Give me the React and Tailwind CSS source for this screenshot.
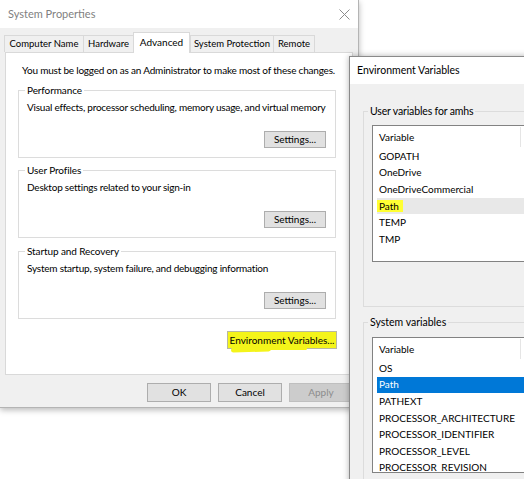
import React from "react";

const Btn = ({ children, className = "" }) => (
  <div
    className={
      "flex items-center justify-center whitespace-nowrap border border-[#adadad] bg-[#e1e1e1] text-black " +
      className
    }
  >
    {children}
  </div>
);

const Group = ({ label, text }) => (
  <div className="relative ml-[12px] w-[318px] h-[68px] border border-[#dcdcdc] pl-[8px] pr-[9px] pt-[9px] flex flex-col">
    <span className="absolute -top-[8px] left-[6px] bg-white px-[2px] leading-[14px] whitespace-nowrap tracking-[-0.1px]">{label}</span>
    <div className="leading-[14px] h-[14px] whitespace-nowrap tracking-[-0.22px]">{text}</div>
    <div className="flex justify-end mt-[17px]">
      <Btn className="w-[62px] h-[17px]">Settings...</Btn>
    </div>
  </div>
);

const Tab = ({ w, children, active }) =>
  active ? (
    <div
      className={`relative z-10 -mb-px h-[21px] shrink-0 bg-white border border-b-0 border-[#d9d9d9] flex items-start justify-center pt-[2px] leading-[14px] whitespace-nowrap ${w}`}
    >
      {children}
    </div>
  ) : (
    <div
      className={`h-[17px] shrink-0 bg-[#f0f0f0] border border-b-0 border-[#d9d9d9] -mr-px flex items-center justify-center leading-[14px] whitespace-nowrap text-[9.5px] ${w}`}
    >
      {children}
    </div>
  );

const ListBox = ({ rows, heightClass }) => (
  <div className={`ml-[8px] border border-[#828282] bg-white text-[10px] ${heightClass}`}>
    <div className="relative h-[22px] flex items-center pl-[6px]">
      Variable
      <span className="absolute left-[147px] top-[1px] h-[20px] w-px bg-[#e5e5e5]" />
    </div>
    {rows.map((r) => (
      <div
        key={r.name}
        className={
          "ml-[4px] h-[16.6px] flex items-center pl-[2px] whitespace-nowrap " +
          (r.sel ? "bg-[#0078d7] text-white" : r.hover ? "bg-[#e8e8e8]" : "")
        }
      >
        {r.mark ? (
          <span className="bg-[#ffff33] -ml-[2px] pl-[2px] pr-[4px] leading-[12px]">{r.name}</span>
        ) : (
          r.name
        )}
      </div>
    ))}
  </div>
);

export default function App() {
  return (
    <div className="relative w-[524px] h-[479px] bg-white overflow-hidden font-['Lato',sans-serif] text-[10px] text-black">
      {/* System Properties window */}
      <div className="absolute left-0 top-0 w-[359px] h-[408px] bg-[#f0f0f0] border-r border-b border-[#b4b4b4] shadow-[0_2px_6px_rgba(0,0,0,0.28)] flex flex-col">
        <div className="h-[28px] shrink-0 bg-white flex items-center justify-between pl-[8px] pr-[8px]">
          <span className="text-[11px] text-[#7f7f7f]">System Properties</span>
          <svg width="11" height="11" viewBox="0 0 11 11">
            <path d="M0.5 0.5 L10.5 10.5 M10.5 0.5 L0.5 10.5" stroke="#8c8c8c" strokeWidth="1" fill="none" />
          </svg>
        </div>
        <div className="h-[24px] shrink-0 flex items-end pl-[4px]">
          <Tab w="w-[80px]">Computer Name</Tab>
          <Tab w="w-[51px]">Hardware</Tab>
          <Tab w="w-[57px]" active>
            Advanced
          </Tab>
          <Tab w="w-[84px]">System Protection</Tab>
          <Tab w="w-[42px]">Remote</Tab>
        </div>
        <div className="mx-[5px] h-[323px] shrink-0 bg-white border border-[#d9d9d9] flex flex-col pt-[10px]">
          <div className="pl-[16px] leading-[14px] h-[14px] whitespace-nowrap tracking-[-0.2px]">
            You must be logged on as an Administrator to make most of these changes.
          </div>
          <div className="mt-[13px]">
            <Group label="Performance" text="Visual effects, processor scheduling, memory usage, and virtual memory" />
          </div>
          <div className="mt-[12px]">
            <Group label="User Profiles" text="Desktop settings related to your sign-in" />
          </div>
          <div className="mt-[13px]">
            <Group label="Startup and Recovery" text="System startup, system failure, and debugging information" />
          </div>
          <div className="mt-[12px] flex justify-end pr-[15px]">
            <div className="relative">
              <Btn className="w-[110px] h-[18px] !bg-[#f4f41a] !border-[#b8b8a0]">Environment Variables...</Btn>
              <span className="absolute left-[4px] top-[16px] w-[40px] h-[5px] rounded-full bg-[#f4f41a] -rotate-2" />
              <span className="absolute left-[30px] top-[16px] w-[50px] h-[3px] rounded-full bg-[#f4f41a]" />
            </div>
          </div>
        </div>
        <div className="mt-[8px] flex pl-[147px] gap-[7px]">
          <Btn className="w-[64px] h-[19px]">OK</Btn>
          <Btn className="w-[64px] h-[19px]">Cancel</Btn>
          <Btn className="w-[64px] h-[19px] !bg-[#cccccc] !border-[#bfbfbf] !text-[#8d8d8d]">Apply</Btn>
        </div>
      </div>

      {/* Environment Variables window */}
      <div className="absolute left-[349px] top-[56px] w-[200px] h-[500px] bg-[#f0f0f0] border border-[#8a8a8a] shadow-[0_0_6px_rgba(0,0,0,0.3)] flex flex-col text-[10.5px]">
        <div className="h-[27px] shrink-0 bg-white flex items-center pl-[7px] whitespace-nowrap">Environment Variables</div>
        <div className="mt-[27px] shrink-0 ml-[13px] relative border border-[#dcdcdc] h-[196px] pt-[13px]">
          <span className="absolute -top-[8px] left-[4px] bg-[#f0f0f0] px-[2px] leading-[14px] whitespace-nowrap tracking-[-0.15px]">
            User variables for amhs
          </span>
          <ListBox
            heightClass="h-[137px]"
            rows={[
              { name: "GOPATH" },
              { name: "OneDrive" },
              { name: "OneDriveCommercial" },
              { name: "Path", hover: true, mark: true },
              { name: "TEMP" },
              { name: "TMP" },
            ]}
          />
        </div>
        <div className="mt-[15px] shrink-0 ml-[13px] relative border border-[#dcdcdc] h-[200px] pt-[14px]">
          <span className="absolute -top-[8px] left-[4px] bg-[#f0f0f0] px-[2px] leading-[14px] whitespace-nowrap">
            System variables
          </span>
          <ListBox
            heightClass="h-[136px] overflow-hidden"
            rows={[
              { name: "OS" },
              { name: "Path", sel: true },
              { name: "PATHEXT" },
              { name: "PROCESSOR_ARCHITECTURE" },
              { name: "PROCESSOR_IDENTIFIER" },
              { name: "PROCESSOR_LEVEL" },
              { name: "PROCESSOR_REVISION" },
            ]}
          />
        </div>
      </div>
    </div>
  );
}
